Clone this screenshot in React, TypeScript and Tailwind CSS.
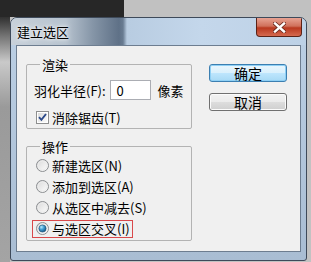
import React from "react"

function Radio({ checked }: { checked?: boolean }) {
  return (
    <svg width="13" height="13" viewBox="0 0 13 13" className="shrink-0">
      <defs>
        <linearGradient id="rb" x1="0" y1="0" x2="1" y2="1">
          <stop offset="0" stopColor="#d8d8d8" />
          <stop offset="1" stopColor="#ffffff" />
        </linearGradient>
        <radialGradient id="rd" cx="0.35" cy="0.3" r="0.8">
          <stop offset="0" stopColor="#b8ecff" />
          <stop offset="0.45" stopColor="#3f9bd0" />
          <stop offset="1" stopColor="#0f4c78" />
        </radialGradient>
      </defs>
      <circle cx="6.5" cy="6.5" r="6" fill="url(#rb)" stroke="#8a8d90" />
      <circle cx="6.5" cy="6.5" r="4.5" fill="none" stroke="#ececec" />
      {checked && <circle cx="6.5" cy="6.5" r="3.6" fill="url(#rd)" stroke="#1d4f73" strokeWidth="0.6" />}
    </svg>
  )
}

function Checkbox() {
  return (
    <svg width="13" height="13" viewBox="0 0 13 13" className="shrink-0">
      <defs>
        <linearGradient id="cb" x1="0" y1="0" x2="1" y2="1">
          <stop offset="0" stopColor="#dcdcdc" />
          <stop offset="1" stopColor="#fbfbfb" />
        </linearGradient>
      </defs>
      <rect x="0.5" y="0.5" width="12" height="12" fill="#ffffff" stroke="#8e8f8f" />
      <rect x="2" y="2" width="9" height="9" fill="url(#cb)" />
      <path d="M3 6.2 L5.4 8.8 L10 3" fill="none" stroke="#2c4a8a" strokeWidth="1.9" />
    </svg>
  )
}

function Group({ label, className, children }: { label: string; className: string; children: React.ReactNode }) {
  return (
    <div className={`relative border border-[#b3b3b3] rounded-[2px] ${className}`}>
      <span className="absolute -top-[8px] left-[13px] bg-[#f0f0f0] px-[2px] leading-[15px]">{label}</span>
      {children}
    </div>
  )
}

export default function App() {
  const options = ["新建选区(N)", "添加到选区(A)", "从选区中减去(S)"]

  return (
    <div className="w-[311px] h-[262px] overflow-hidden flex flex-col bg-[#c2c2c2] text-[13px] text-black font-['Noto_Sans_CJK_SC','Noto_Sans',sans-serif]">
      <div className="h-[17px] flex shrink-0">
        <div className="w-[124px] bg-[#272727]" />
        <div className="flex-1 bg-[#c1c1c1]" />
      </div>
      <div className="flex flex-1">
        <div className="w-[10px] bg-[linear-gradient(to_bottom,#303030_0px,#777_20px,#c9c9c9_45px,#9a9a9a_90px,#a4a4a4_100%)]" />
        <div className="w-[297px] h-[244px] flex flex-col border border-[#3e4a5a] rounded-t-[7px] rounded-b-[3px] bg-[linear-gradient(to_bottom,#bcd0e5,#a9bdd3)] overflow-hidden">
          <div className="h-[27px] shrink-0 flex items-start justify-between bg-[linear-gradient(to_right,#c8d1da_0px,#b6c2ce_55px,#8595a7_82px,#5f7187_108px,#687b91_112px,#b8cce1_116px,#c4d7eb_190px,#bdd1e6_100%)]">
            <span className="pl-[6px] pt-[6px] leading-[15px] text-[13px] [text-shadow:0_0_6px_#ffffff,0_0_3px_#ffffff]">建立选区</span>
            <div className="mr-[4px] w-[46px] h-[19px] flex items-center justify-center border border-t-0 border-[#5b2217] rounded-b-[4px] bg-[linear-gradient(to_bottom,#e8a393_0%,#d0705b_45%,#b9381f_55%,#d56a50_100%)]">
              <svg width="13" height="11" viewBox="0 0 13 11">
                <path d="M2 1.5 L11 9.5 M11 1.5 L2 9.5" stroke="#6b2a1f" strokeWidth="4" strokeLinecap="square" />
                <path d="M2 1.5 L11 9.5 M11 1.5 L2 9.5" stroke="#ffffff" strokeWidth="2.4" strokeLinecap="square" />
              </svg>
            </div>
          </div>
          <div className="ml-[5px] mr-[5px] h-[207px] border border-[#6d7d90] bg-[#f0f0f0] flex pl-[9px] pt-[18px]">
            <div className="w-[166px] flex flex-col">
              <Group label="渲染" className="h-[65px] pt-[15px]">
                <div className="flex items-center pl-[7px] h-[20px]">
                  <span className="leading-[15px]">羽化半径(F):</span>
                  <div className="ml-[4px] w-[41px] h-[20px] border border-[#abadb3] bg-white pl-[6px] flex items-center leading-[15px]">0</div>
                  <span className="ml-[7px] leading-[15px]">像素</span>
                </div>
                <div className="flex items-center pl-[9px] mt-[10px] h-[15px] gap-[3px]">
                  <Checkbox />
                  <span className="leading-[15px]">消除锯齿(T)</span>
                </div>
              </Group>
              <Group label="操作" className="mt-[17px] h-[95px] pt-[8px]">
                {options.map((o) => (
                  <div key={o} className="h-[21px] flex items-center pl-[9px] gap-[3px]">
                    <Radio />
                    <span className="leading-[15px]">{o}</span>
                  </div>
                ))}
                <div className="h-[21px] flex items-center pl-[5px]">
                  <div className="h-[18px] flex items-center gap-[3px] pl-[3px] pr-[2px] border border-[#d9494b]">
                    <Radio checked />
                    <span className="leading-[15px]">与选区交叉(I)</span>
                  </div>
                </div>
              </Group>
            </div>
            <div className="ml-[17px] flex flex-col gap-[11px]">
              <button className="w-[78px] h-[18px] flex items-center justify-center rounded-[3px] border border-[#3c7fb1] bg-[linear-gradient(to_bottom,#eaf6fd_0%,#d9f0fc_50%,#bee6fd_51%,#a7d9f5_100%)] text-[14px] leading-[16px] shadow-[inset_0_0_0_1px_#8fd0f5]">确定</button>
              <button className="w-[78px] h-[18px] flex items-center justify-center rounded-[3px] border border-[#707070] bg-[linear-gradient(to_bottom,#f2f2f2_0%,#ebebeb_50%,#dddddd_51%,#cfcfcf_100%)] text-[14px] leading-[16px] shadow-[inset_0_0_0_1px_#fbfbfb]">取消</button>
            </div>
          </div>
        </div>
      </div>
    </div>
  )
}
